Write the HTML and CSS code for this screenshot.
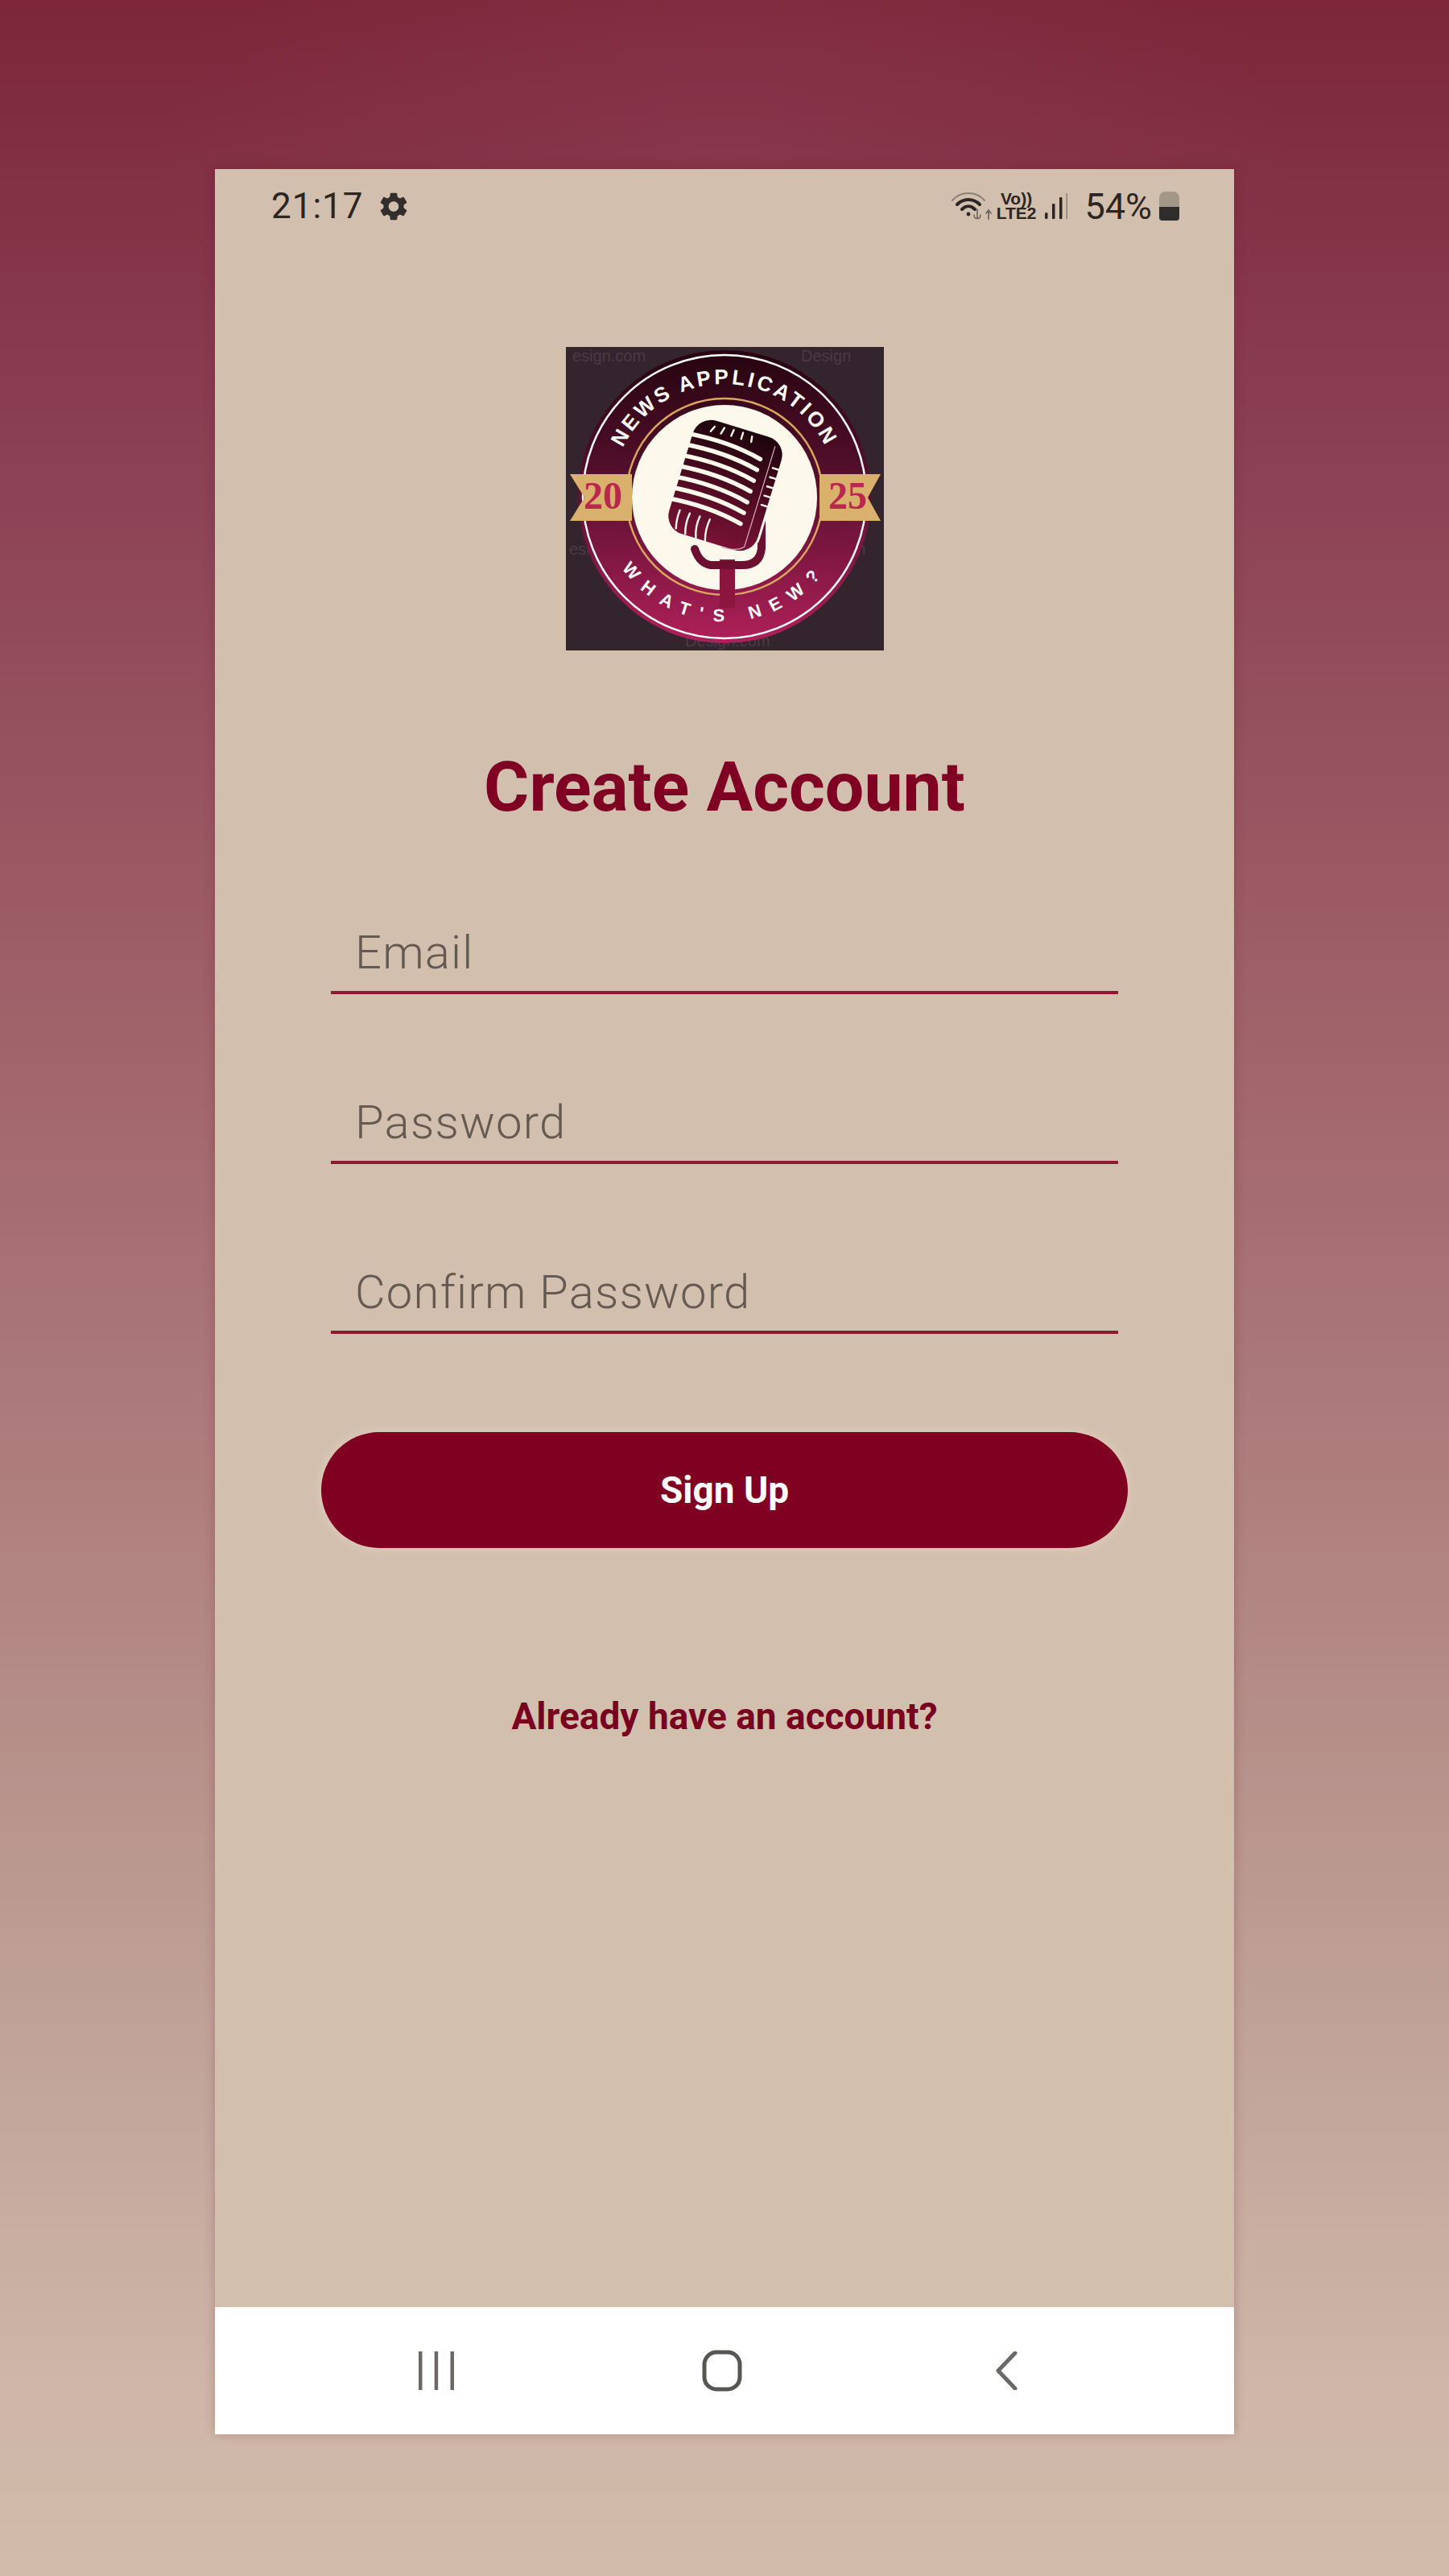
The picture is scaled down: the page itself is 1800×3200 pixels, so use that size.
FILE: index.html
```html
<!DOCTYPE html>
<html>
    <head>
        <meta charset="utf8">
        <title>Create Account</title>
        <link rel="stylesheet" href="styles.css">
    </head>
    <body>
        <div class="phone">
            <div class="status_bar">
                <div class="status_left">
                    <span class="clock">21:17</span>
                    <svg class="gear" viewBox="2.5 2 19 20"><path d="M19.14 12.94c.04-.3.06-.61.06-.94 0-.32-.02-.64-.07-.94l2.03-1.58c.18-.14.23-.41.12-.61l-1.92-3.32c-.12-.22-.37-.29-.59-.22l-2.39.96c-.5-.38-1.03-.7-1.62-.94l-.36-2.54c-.04-.24-.24-.41-.48-.41h-3.84c-.24 0-.43.17-.47.41l-.36 2.54c-.59.24-1.13.57-1.62.94l-2.39-.96c-.22-.08-.47 0-.59.22L2.74 8.87c-.12.21-.08.47.12.61l2.03 1.58c-.05.3-.09.63-.09.94s.02.64.07.94l-2.03 1.58c-.18.14-.23.41-.12.61l1.92 3.32c.12.22.37.29.59.22l2.39-.96c.5.38 1.03.7 1.62.94l.36 2.54c.05.24.24.41.48.41h3.84c.24 0 .44-.17.47-.41l.36-2.54c.59-.24 1.13-.56 1.62-.94l2.39.96c.22.08.47 0 .59-.22l1.92-3.32c.12-.22.07-.47-.12-.61l-2.01-1.58zM12 15.6c-1.98 0-3.6-1.62-3.6-3.6s1.62-3.6 3.6-3.6 3.6 1.62 3.6 3.6-1.62 3.6-3.6 3.6z"/></svg>
                </div>
                <div class="status_right">
                    <svg class="wifi" viewBox="0 0 52 36" fill="none" stroke="#2b2622" stroke-linecap="round">
                        <path d="M1 11 C11 -1 31 -1 41 11" stroke="#8a8076" stroke-width="2"/>
                        <path d="M7 16 C15 8 27 8 35 16" stroke-width="4"/>
                        <path d="M13 22 C18 17 24 17 29 22" stroke-width="4"/>
                        <circle cx="21" cy="28" r="2.4" fill="#2b2622" stroke="none"/>
                        <path d="M32 22 V33 M28 29 C28 35 36 35 36 29" stroke="#6f665e" stroke-width="1.6"/>
                        <path d="M46 34 V24 M43 27 L46 23 L49 27" stroke="#6f665e" stroke-width="1.8"/>
                    </svg>
                    <div class="volte">
                        <span>Vo))</span>
                        <span>LTE2</span>
                    </div>
                    <svg class="signal" viewBox="0 0 28 34" fill="#2b2622">
                        <rect x="0" y="25" width="3.5" height="8" rx="1.5"/>
                        <rect x="9" y="14" width="3.5" height="19" rx="1"/>
                        <rect x="18" y="6" width="3.5" height="27" rx="1"/>
                        <rect x="26.5" y="1" width="1.5" height="32" fill="#8a8076"/>
                    </svg>
                    <span class="percent">54%</span>
                    <div class="battery"><div class="battery_level"></div></div>
                </div>
            </div>

            <div class="main">
                <svg class="logo" viewBox="0 0 395 377">
                    <defs>
                        <linearGradient id="disc" x1="0" y1="0" x2="0" y2="1">
                            <stop offset="0" stop-color="#26040f"/>
                            <stop offset="0.45" stop-color="#57102e"/>
                            <stop offset="1" stop-color="#b0205a"/>
                        </linearGradient>
                        <linearGradient id="mic" x1="0" y1="0" x2="0" y2="1">
                            <stop offset="0" stop-color="#1c040c"/>
                            <stop offset="1" stop-color="#7a1236"/>
                        </linearGradient>
                        <path id="arc_top" d="M 57 186 A 140 140 0 0 1 337 186"/>
                        <path id="arc_bottom" d="M 42 186 A 155 155 0 0 0 352 186"/>
                    </defs>
                    <rect width="395" height="377" fill="#33242e"/>
                    <text class="logo_mark" x="8" y="18">esign.com</text>
                    <text class="logo_mark" x="292" y="18">Design</text>
                    <text class="logo_mark" x="4" y="258">esign.c</text>
                    <text class="logo_mark" x="310" y="258">Design</text>
                    <text class="logo_mark" x="148" y="372">Design.com</text>

                    <circle cx="197" cy="186" r="182" fill="url(#disc)"/>
                    <circle cx="197" cy="186" r="176" fill="none" stroke="#fff" stroke-width="2.5"/>
                    <circle cx="197" cy="186" r="122" fill="none" stroke="#d9a860" stroke-width="2.5"/>
                    <circle cx="197" cy="187" r="115" fill="#fdf8ec"/>

                    <text class="logo_top"><textPath href="#arc_top" startOffset="50%" text-anchor="middle">NEWS APPLICATION</textPath></text>
                    <text class="logo_bottom"><textPath href="#arc_bottom" startOffset="50%" text-anchor="middle">WHAT'S NEW?</textPath></text>

                    <polygon points="5,158 82,158 82,216 5,216 23,187" fill="#d9b06c"/>
                    <polygon points="315,158 391,158 375,187 391,216 315,216" fill="#d9b06c"/>
                    <text class="logo_year" x="46" y="201" text-anchor="middle">20</text>
                    <text class="logo_year" x="350" y="201" text-anchor="middle">25</text>

                    <rect x="191" y="264" width="19" height="60" fill="#8c1540"/>
                    <path d="M 243 140 L 243 250 Q 241 271 219 271 L 180 271 Q 166 269 160 251" fill="none" stroke="#6d0f30" stroke-width="10" stroke-linecap="round"/>
                    <g transform="translate(198 172) rotate(17)">
                        <rect x="-59" y="-75" width="118" height="150" rx="25" fill="url(#mic)" stroke="#fdf8ec" stroke-width="3"/>
                        <g stroke="#fdf8ec" stroke-width="5.5" stroke-linecap="round" fill="none">
                            <path d="M-65 -48 Q -12 -54 32 -44"/>
                            <path d="M-65 -34 Q -12 -40 32 -30"/>
                            <path d="M-65 -20 Q -12 -26 32 -16"/>
                            <path d="M-65 -6 Q -12 -12 32 -2"/>
                            <path d="M-65 8 Q -12 2 32 12"/>
                            <path d="M-65 22 Q -12 16 32 26"/>
                            <path d="M-65 36 Q -12 30 32 40"/>
                        </g>
                        <g stroke="#fdf8ec" stroke-width="2.4" stroke-linecap="round" fill="none">
                            <path d="M-34 -66 L-37 -59 M-22 -68 L-24 -60 M-10 -69 L-11 -61 M2 -69 L2 -61 M14 -68 L15 -61"/>
                            <path d="M-45 46 Q-46 58 -43 69 M-32 46 Q-34 60 -30 72 M-19 46 Q-21 60 -16 73 M-6 46 Q-8 60 -4 73"/>
                            <path d="M61 -38 L50 -38 M61 -26 L50 -26 M61 -14 L50 -14 M61 -2 L50 -2 M61 10 L50 10"/>
                            <path d="M45 -64 L45 66 Q 39 74 18 75" stroke="#d9a8b4" stroke-width="1.2"/>
                        </g>
                    </g>
                </svg>

                <h1 class="title">Create Account</h1>

                <div class="form">
                    <div class="field"><span class="field_label">Email</span></div>
                    <div class="field"><span class="field_label">Password</span></div>
                    <div class="field"><span class="field_label">Confirm Password</span></div>
                </div>

                <button class="sign_up">Sign Up</button>
                <a class="login_link">Already have an account?</a>
            </div>

            <div class="nav_bar">
                <svg class="nav_icon" viewBox="0 0 48 48" fill="#6b6865"><rect x="2" y="0" width="4.5" height="48"/><rect x="21.7" y="0" width="4.5" height="48"/><rect x="41.5" y="0" width="4.5" height="48"/></svg>
                <svg class="nav_icon home_icon" viewBox="0 0 50 52" fill="none" stroke="#585654" stroke-width="5"><rect x="3" y="3" width="44" height="46" rx="15"/></svg>
                <svg class="nav_icon" viewBox="0 0 48 48" fill="none" stroke="#6b6865" stroke-width="5" stroke-linecap="round" stroke-linejoin="round"><path d="M33 2 L12 24 L33 46"/></svg>
            </div>
        </div>
    </body>
</html>
```
FILE: styles.css
```css
html, body{
    margin:0;
    padding:0;
}
body{
    width:1800px;
    height:3200px;
    overflow:hidden;
    padding-top:210px;
    box-sizing:border-box;
    font-family:Roboto, "Liberation Sans", sans-serif;
    background:
        radial-gradient(ellipse 700px 420px at 50% 6%, rgba(150, 70, 95, 0.3), rgba(150, 70, 95, 0)),
        linear-gradient(180deg, #7d2639 0%, #893c50 15%, #a2666c 42%, #b08280 60%, #bfa197 78%, #cfb6a8 93%, #d2bbab 100%);
}
.phone{
    width:1266px;
    height:2814px;
    margin:0 auto;
    display:flex;
    flex-direction:column;
    background:#d3bfae;
    box-shadow:0 0 12px rgba(90, 20, 30, 0.25);
}
.status_bar{
    height:92px;
    padding:0 68px 0 70px;
    display:flex;
    align-items:center;
    justify-content:space-between;
    color:#2b2622;
}
.status_left, .status_right{
    display:flex;
    align-items:center;
}
.clock{
    font-size:44px;
    letter-spacing:1px;
}
.gear{
    width:34px;
    height:35px;
    margin-left:20px;
    fill:#332e2b;
}
.wifi{
    width:52px;
    height:36px;
}
.volte{
    display:flex;
    flex-direction:column;
    align-items:center;
    margin-left:4px;
    font-size:21px;
    font-weight:700;
    line-height:18px;
    font-family:"Liberation Sans", sans-serif;
}
.signal{
    width:28px;
    height:34px;
    margin-left:11px;
}
.percent{
    font-size:45px;
    margin-left:21px;
}
.battery{
    width:25px;
    height:36px;
    margin-left:9px;
    border-radius:8px 8px 4px 4px;
    background:#a39789;
    display:flex;
    align-items:flex-end;
}
.battery_level{
    width:100%;
    height:17px;
    border-radius:0 0 4px 4px;
    background:#2f2d2c;
}
.main{
    flex:1;
    display:flex;
    flex-direction:column;
    align-items:center;
}
.logo{
    width:395px;
    height:377px;
    margin-top:129px;
}
.logo_mark{
    font:20px "Liberation Sans", sans-serif;
    fill:#4a3b45;
}
.logo_top{
    font:700 26px "Liberation Sans", sans-serif;
    letter-spacing:3.5px;
    fill:#fff;
}
.logo_bottom{
    font:700 22px "Liberation Sans", sans-serif;
    letter-spacing:13px;
    fill:#fff;
}
.logo_year{
    font:700 48px "Liberation Serif", serif;
    fill:#b9274f;
}
.title{
    margin:120px 0 0 0;
    font-size:86px;
    line-height:100px;
    font-weight:700;
    color:#7f0022;
}
.form{
    width:978px;
    margin-top:107px;
}
.field{
    height:211px;
    box-sizing:border-box;
    padding:0 0 14px 30px;
    display:flex;
    align-items:flex-end;
    border-bottom:4px solid #8c1a30;
}
.field:first-child{
    height:100px;
}
.field_label{
    font-size:58px;
    line-height:68px;
    font-weight:300;
    letter-spacing:1.2px;
    color:#655a52;
}
.sign_up{
    width:1002px;
    height:144px;
    margin-top:122px;
    border:0;
    border-radius:72px;
    background:#7f0020;
    color:#fff;
    font-family:Roboto, sans-serif;
    font-size:46px;
    font-weight:700;
    box-shadow:0 0 14px rgba(255, 235, 215, 0.4);
}
.login_link{
    margin-top:181px;
    font-size:46px;
    line-height:56px;
    font-weight:700;
    color:#7a0020;
}
.nav_bar{
    height:158px;
    padding:0 257px 0 251px;
    display:flex;
    align-items:center;
    justify-content:space-between;
    background:#fff;
}
.nav_icon{
    width:48px;
    height:48px;
}
.home_icon{
    width:50px;
    height:52px;
}
```
